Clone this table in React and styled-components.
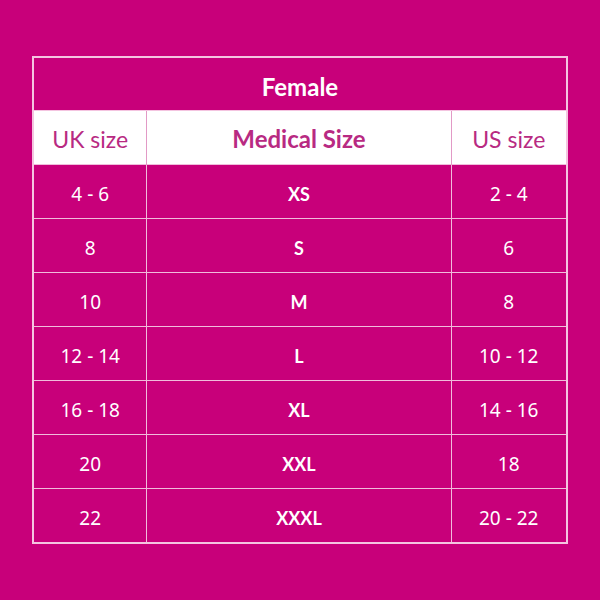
import React from 'react'
import styled, { createGlobalStyle } from 'styled-components'

const GlobalStyle = createGlobalStyle`
  html, body {
    margin: 0;
    padding: 0;
    background: #c8007a;
  }
`

const Page = styled.div`
  width: 600px;
  height: 600px;
  display: flex;
  align-items: center;
  justify-content: center;
  background: #c8007a;
`

const Table = styled.table`
  width: 533px;
  border-collapse: collapse;
  border: 2px solid #f4c4e0;
  table-layout: fixed;
`

const TitleCell = styled.th`
  height: 48px;
  padding: 4px 0 0;
  color: #fff;
  font-family: Lato, "Open Sans", sans-serif;
  font-weight: 700;
  font-size: 24px;
  text-align: center;
  border-bottom: 1px solid #f4c4e0;
`

const HeadCell = styled.th`
  height: 51px;
  padding: 2px 0 0;
  background: #fff;
  color: #b82a82;
  font-family: Lato, "Open Sans", sans-serif;
  font-weight: ${p => (p.$bold ? 700 : 400)};
  font-size: ${p => (p.$bold ? '24px' : '23px')};
  text-align: center;
  border-left: 1px solid #e29ac6;
  &:first-child {
    border-left: none;
  }
`

const Cell = styled.td`
  height: 48px;
  padding: 5px 0 0;
  color: #fff;
  font-family: ${p => (p.$bold ? 'Lato, "Open Sans", sans-serif' : '"Noto Sans", "Open Sans", sans-serif')};
  font-weight: ${p => (p.$bold ? 700 : 400)};
  font-size: ${p => (p.$bold ? '18px' : '19px')};
  text-align: center;
  border: 1px solid #f0bcdb;
`

const rows = [
  ['4 - 6', 'XS', '2 - 4'],
  ['8', 'S', '6'],
  ['10', 'M', '8'],
  ['12 - 14', 'L', '10 - 12'],
  ['16 - 18', 'XL', '14 - 16'],
  ['20', 'XXL', '18'],
  ['22', 'XXXL', '20 - 22'],
]

export default function App() {
  return (
    <Page>
      <GlobalStyle />
      <Table>
        <colgroup>
          <col style={{ width: 113 }} />
          <col style={{ width: 305 }} />
          <col style={{ width: 115 }} />
        </colgroup>
        <thead>
          <tr>
            <TitleCell colSpan={3}>Female</TitleCell>
          </tr>
          <tr>
            <HeadCell>UK size</HeadCell>
            <HeadCell $bold>Medical Size</HeadCell>
            <HeadCell>US size</HeadCell>
          </tr>
        </thead>
        <tbody>
          {rows.map(([uk, med, us]) => (
            <tr key={med}>
              <Cell>{uk}</Cell>
              <Cell $bold>{med}</Cell>
              <Cell>{us}</Cell>
            </tr>
          ))}
        </tbody>
      </Table>
    </Page>
  )
}
